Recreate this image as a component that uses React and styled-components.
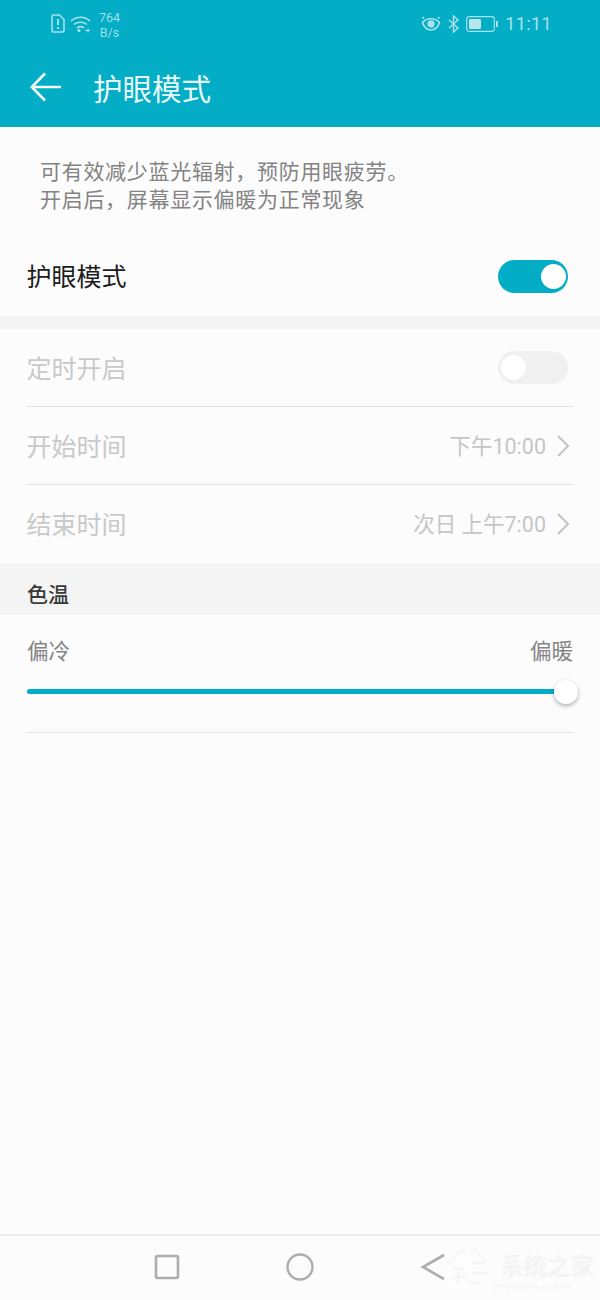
import React from "react";
import styled, { createGlobalStyle } from "styled-components";

const Global = createGlobalStyle`
  html, body { margin: 0; padding: 0; background: #fcfcfc; }
  * { box-sizing: border-box; }
`;
const CJK = `"Noto Sans CJK SC", "Noto Sans", sans-serif`;
const LATIN = `Roboto, "Noto Sans CJK SC", sans-serif`;
const TEAL = "#02adc5";

const Page = styled.div`
  width: 600px; height: 1300px; background: #fcfcfc; display: flex; flex-direction: column;
  font-family: ${CJK}; position: relative; overflow: hidden;
`;
const Top = styled.header`
  height: 127px; background: ${TEAL}; display: flex; flex-direction: column; flex: none;
`;
const Status = styled.div`
  height: 49px; display: flex; align-items: center; justify-content: space-between;
  padding: 0 48px 2px 51px; color: #a8e2ea;
`;
const StatusGroup = styled.div`
  display: flex; align-items: center; gap: ${p => p.$gap || 5}px;
`;
const Speed = styled.div`
  font: 12.5px/15px ${LATIN}; text-align: center; margin: 3px 0 0 3px; opacity: .95;
`;
const Clock = styled.span`
  font: 18px/20px ${LATIN}; letter-spacing: .4px; margin-left: 1px;
`;
const TitleBar = styled.div`
  flex: 1; display: flex; align-items: center; padding: 0 0 2px 30px; gap: 32px; color: #f2fbfc;
`;
const Title = styled.h1`
  margin: 0; font: 400 29.5px/40px ${CJK}; color: #e9f8fa;
`;
const Desc = styled.p`
  margin: 0; padding: 29px 0 0 40px; height: 107px; flex: none;
  font: 400 21px/28px ${CJK}; color: #838383; letter-spacing: .7px;
`;
const Row = styled.div`
  height: ${p => p.$h || 78}px; flex: none; margin: 0 27px; display: flex; align-items: center;
  justify-content: space-between; border-bottom: ${p => p.$line ? "1px solid #e2e2e2" : "none"};
  padding-top: ${p => p.$pad || 0}px;
`;
const Label = styled.span`
  font: 400 25px/34px ${CJK}; color: ${p => p.$off ? "#c9c9c9" : "#1c1c1c"};
  margin: -2px 0 0 -.5px;
`;
const Value = styled.span`
  display: flex; align-items: center; gap: 10px; margin-right: 3px;
  font: 400 21.5px/30px ${LATIN}; color: #c6c6c6;
`;
const ValueText = styled.span`
  padding-top: 2px;
`;
const Switch = styled.div`
  width: 70px; height: 33px; border-radius: 17px; display: flex; align-items: center; margin-right: 5px;
  padding: 0 ${p => p.$on ? 2 : 0}px 0 3px;
  background: ${p => p.$on ? TEAL : "#f0f0f0"};
  justify-content: ${p => p.$on ? "flex-end" : "flex-start"};
  &::after { content: ""; width: 25px; height: 25px; border-radius: 50%; background: #fff; }
`;
const Band = styled.div`
  height: ${p => p.$h}px; background: #f4f4f4; flex: none; padding: 0 0 3px 27px;
  display: flex; align-items: flex-end; font: 500 21px/38px ${CJK}; color: #3a3a3a;
`;
const Scale = styled.div`
  margin: 18px 27px 0; display: flex; justify-content: space-between;
  font: 400 21.5px/34px ${CJK}; color: #858585;
`;
const Track = styled.div`
  margin: 22px 27px 0; height: 5px; background: ${TEAL}; border-radius: 3px; position: relative;
`;
const Thumb = styled.div`
  position: absolute; right: -5px; top: -9px; width: 24px; height: 24px; border-radius: 50%;
  background: #fff; box-shadow: 0 2px 4px rgba(0,0,0,.3);
`;
const Rule = styled.div`
  margin: 38px 27px 0; height: 1px; background: #e4e4e4;
`;
const Nav = styled.nav`
  margin-top: auto; height: 66px; flex: none; border-top: 2px solid #ececec;
  display: flex; align-items: center; padding: 0 0 2px 154px; gap: 106px;
`;
const Mark = styled.div`
  position: absolute; left: 438px; top: 1245px; display: flex; gap: 6px; align-items: flex-start; color: #fff;
`;
const MarkText = styled.div`
  display: flex; flex-direction: column; padding-top: 8px; font: 600 23.5px/25px ${CJK}; letter-spacing: 0;
  color: #f4f4f4;
  small { margin: 6px 0 0 -8px; font: 600 8px/8px ${LATIN}; letter-spacing: .5px; color: #f6f6f6; white-space: nowrap; }
`;

const Chevron = () => (
  <svg width="14" height="24" viewBox="0 0 14 24" fill="none" stroke="#c6c6c6" strokeWidth="2.2">
    <path d="M2 2l10 10L2 22" />
  </svg>
);

export default function App() {
  return (
    <Page>
      <Global />
      <Top>
        <Status>
          <StatusGroup $gap={5}>
            <svg width="14" height="19" viewBox="0 0 14 19" fill="none" stroke="#a8e2ea" strokeWidth="1.6">
              <path d="M2.500 1h6l4.500 4.500V16.500a1.500 1.500 0 0 1-1.500 1.500h-9a1.500 1.500 0 0 1-1.500-1.500V2.500A1.500 1.500 0 0 1 2.500 1z" />
              <path d="M7 5v6M7 13v2" strokeWidth="2" />
            </svg>
            <svg width="21" height="18" viewBox="0 0 21 18" fill="none" stroke="#a8e2ea" strokeWidth="1.600">
              <path d="M1 6c5.500-5 13.500-5 19 0M4 9.500c3.500-3 9.500-3 13 0M7 13c2-1.500 5-1.500 7 0" />
              <circle cx="9" cy="15.500" r="1.600" fill="#a8e2ea" stroke="none" />
              <path d="M15 15.500h5M18 13.500v4" strokeWidth="1.200" />
            </svg>
            <Speed>764<br />B/s</Speed>
          </StatusGroup>
          <StatusGroup $gap={6}>
            <svg width="20" height="16" viewBox="0 0 20 16" fill="none" stroke="#a8e2ea" strokeWidth="1.700">
              <path d="M1.500 6.500C6 1.500 14 1.500 18.500 6.500 17 11 14 14 10 14S3 11 1.500 6.500z" />
              <circle cx="10" cy="8" r="2.800" fill="#a8e2ea" />
              <path d="M3 2.500L1.500 1M17 2.500L18.500 1" />
            </svg>
            <svg width="13" height="18" viewBox="0 0 13 18" fill="none" stroke="#a8e2ea" strokeWidth="1.500">
              <path d="M2 5l9 8-4.500 4V1L11 5 2 13" />
            </svg>
            <svg width="32" height="16" viewBox="0 0 32 16" fill="none">
              <rect x=".7" y=".7" width="27.600" height="14.600" rx="2.500" stroke="#a8e2ea" strokeWidth="1.200" />
              <rect x="3" y="3" width="12" height="10" rx="1" fill="#b8e6ec" />
              <rect x="30" y="5" width="2" height="6" fill="#a8e2ea" />
            </svg>
            <Clock>11:11</Clock>
          </StatusGroup>
        </Status>
        <TitleBar>
          <svg width="31" height="30" viewBox="0 0 31 30" fill="none" stroke="#f2fbfc" strokeWidth="2.600">
            <path d="M31 15H2M15 1.500L1.800 15 15 28.500" />
          </svg>
          <Title>护眼模式</Title>
        </TitleBar>
      </Top>
      <Desc>可有效减少蓝光辐射，预防用眼疲劳。<br />开启后，屏幕显示偏暖为正常现象</Desc>
      <Row $h={82} $pad={2}>
        <Label>护眼模式</Label>
        <Switch $on />
      </Row>
      <Band $h={13} />
      <Row $line>
        <Label $off>定时开启</Label>
        <Switch />
      </Row>
      <Row $line>
        <Label $off>开始时间</Label>
        <Value><ValueText>下午10:00</ValueText><Chevron /></Value>
      </Row>
      <Row>
        <Label $off>结束时间</Label>
        <Value><ValueText>次日 上午7:00</ValueText><Chevron /></Value>
      </Row>
      <Band $h={52}>色温</Band>
      <Scale><span>偏冷</span><span>偏暖</span></Scale>
      <Track><Thumb /></Track>
      <Rule />
      <Nav>
        <svg width="26" height="26" viewBox="0 0 26 26" fill="none" stroke="#adadad" strokeWidth="2.600">
          <rect x="2" y="2" width="22" height="22" rx="1.500" />
        </svg>
        <svg width="28" height="28" viewBox="0 0 28 28" fill="none" stroke="#adadad" strokeWidth="2.400">
          <circle cx="14" cy="14" r="12.500" />
        </svg>
        <svg width="26" height="28" viewBox="0 0 26 28" fill="none" stroke="#adadad" strokeWidth="2.600">
          <path d="M24 2L3 14l21 12" />
        </svg>
      </Nav>
      <Mark>
        <svg width="56" height="48" viewBox="0 0 56 48">
          <path d="M32 0L4 24h6v22h16l18-4-4-5 12-3-6-5 10-5-8-6-6-2-6-2z" fill="#fdfdfd" />
          <path d="M32 0L6 22M32 0l16 16" fill="none" stroke="#f8f8f8" strokeWidth="2" />
          <path d="M14 24h12M14 32h14M20 22v18M34 18h14M34 28h16M30 38h12" fill="none" stroke="#f5f5f5" strokeWidth="2.500" />
        </svg>
        <MarkText>系统之家<small>XITONGZHIJIA.NET</small></MarkText>
      </Mark>
    </Page>
  );
}
